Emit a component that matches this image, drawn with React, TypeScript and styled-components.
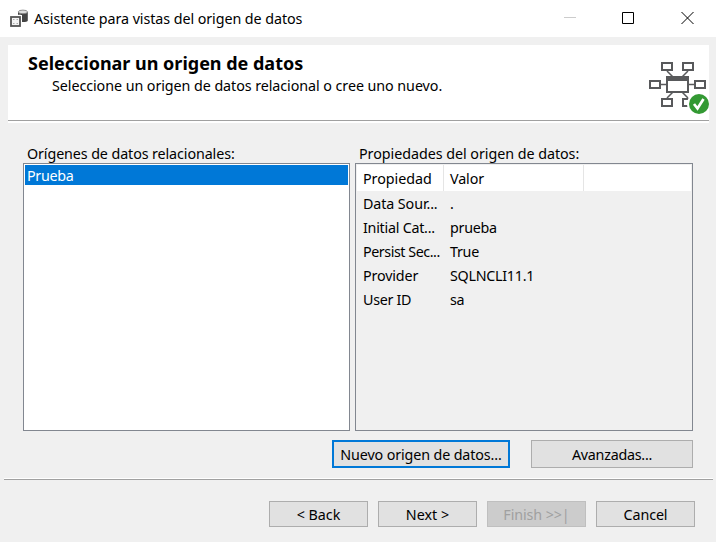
import React from "react";
import styled, { createGlobalStyle } from "styled-components";

const GlobalStyle = createGlobalStyle`
  * { box-sizing: border-box; }
  body { margin: 0; background: #f0f0f0; }
`;

const Window = styled.div`
  width: 716px;
  height: 542px;
  display: flex;
  flex-direction: column;
  overflow: hidden;
  background: #f0f0f0;
  color: #000;
  font: 14.3px/20px "Noto Sans", "Open Sans", sans-serif;
  white-space: nowrap;
`;

const TitleBar = styled.header`
  height: 37px;
  flex: none;
  display: flex;
  align-items: center;
  padding: 0 22px 0 9px;
  background: #fff;
`;

const Caption = styled.div`
  flex: 1;
  margin-left: 5px;
`;

const WindowControls = styled.div`
  display: flex;
  gap: 46px;
  padding-bottom: 1px;
  svg { display: block; }
`;

const Text = styled.span<{ $w?: number }>`
  display: inline-block;
  letter-spacing: ${(p) => p.$w ?? 0}px;
`;

const Banner = styled.section`
  flex: none;
  height: 78px;
  margin: 8px 7px 0 8px;
  display: flex;
  justify-content: space-between;
  background: linear-gradient(#fff 75px, #a0a0a0 75px, #a0a0a0 76px, #fff 76px);
`;

const BannerText = styled.div`
  padding: 6px 0 0 20px;
`;

const Heading = styled.h1`
  margin: 0;
  font-size: 18px;
  line-height: 24px;
  font-weight: 700;
`;

const Subheading = styled.p`
  margin: 1px 0 0 24px;
`;

const BannerIcon = styled.div`
  width: 61px;
  padding-top: 16px;
  svg { display: block; }
`;

const Columns = styled.main`
  flex: none;
  display: grid;
  grid-template-columns: 327px 338px;
  column-gap: 5px;
  margin: 20px 0 0 23px;
`;

const Label = styled.div`
  height: 20px;
  line-height: 21px;
  padding-left: 4px;
`;

const ListBox = styled.div<{ $plain?: boolean }>`
  height: 268px;
  padding: 1px;
  border: 1px solid #828790;
  background: ${(p) => (p.$plain ? "#f0f0f0" : "#fff")};
`;

const SelectedItem = styled.div`
  height: 20px;
  line-height: 22px;
  padding-left: 2px;
  background: #0078d7;
  color: #fff;
`;

const HeaderRow = styled.div`
  display: grid;
  grid-template-columns: 87px 140px 1fr;
  height: 26px;
  margin-bottom: 1px;
  line-height: 28px;
  background: #fff;
`;

const HeaderCell = styled.div`
  height: 26px;
  padding-left: 6px;
  border-right: 1px solid #e5e5e5;
  &:last-child { border: 0; }
`;

const PropertyRow = styled.div`
  display: grid;
  grid-template-columns: 87px 1fr;
  height: 24px;
  line-height: 24px;
`;

const Cell = styled.div`
  padding-left: 6px;
`;

const Button = styled.button<{ $width: number; $primary?: boolean }>`
  width: ${(p) => p.$width}px;
  height: 100%;
  padding: 2px 0 0;
  border: ${(p) => (p.$primary ? "2px solid #0078d7" : "1px solid #adadad")};
  background: #e1e1e1;
  color: #000;
  font: inherit;
  &:disabled {
    background: #ccc;
    border-color: #bfbfbf;
    color: #a0a0a0;
  }
`;

const Actions = styled.div`
  flex: none;
  display: flex;
  justify-content: flex-end;
  gap: 21px;
  height: 28px;
  margin: 9px 23px 0 0;
`;

const Divider = styled.div`
  flex: none;
  height: 2px;
  margin: 10px 3px 0 4px;
  border-top: 1px solid #fff;
  border-bottom: 1px solid #a0a0a0;
`;

const Footer = styled.footer`
  flex: none;
  display: flex;
  justify-content: flex-end;
  gap: 10px;
  height: 26px;
  margin: 21px 21px 0 0;
`;

const AppIcon = () => (
  <svg width="20" height="20" viewBox="0 0 20 20">
    <path d="M9 3v8.500c0 2 9.800 2 9.800 0V3z" fill="#444" />
    <path d="M9.500 5v6l2.500.8V5.500z" fill="#888" />
    <ellipse cx="13.900" cy="2.900" rx="4.600" ry="1.800" fill="#ddd" stroke="#777" strokeWidth=".8" />
    <rect x="2" y="8" width="9" height="9" fill="#f4f4f4" stroke="#fff" strokeWidth="4" />
    <rect x="2" y="8" width="9" height="9" fill="#f4f4f4" stroke="#555" strokeWidth="1.800" />
    <path d="M4 10.500h1.500M7.500 10.500H9M4 14.500h1.500M7.500 14.500H9" stroke="#aaa" />
  </svg>
);

const SchemaIcon = () => (
  <svg width="61" height="53" viewBox="648 61 61 53" fill="none">
    <path d="M667 71l6 6M688 71l-6 6M661 84.500h5M689 84.500h5M673 92l-6 6M682 92l6 6" stroke="#58595b" strokeWidth="1.500" />
    <g fill="#fff" stroke="#58595b" strokeWidth="2">
      <path d="M662 63h10v7h-10zM683 63h10v7h-10zM650 81h10v7h-10zM695 81h10v7h-10zM662 99h10v7h-10zM683 99h10v7h-10z" />
      <path d="M667 77h21v15h-21z" />
    </g>
    <path d="M666 76h23v5h-23z" fill="#58595b" />
    <circle cx="699" cy="104" r="12" fill="#fff" />
    <circle cx="699" cy="104" r="10" fill="#339933" />
    <path d="M694 104l3.500 4.500 6-9.500" stroke="#fff" strokeWidth="2.700" />
  </svg>
);

const properties = [
  { name: "Data Sour...", value: ".", spacing: -0.1 },
  { name: "Initial Cat...", value: "prueba", spacing: -0.25 },
  { name: "Persist Sec...", value: "True", spacing: -0.45 },
  { name: "Provider", value: "SQLNCLI11.1", spacing: -0.15 },
  { name: "User ID", value: "sa", spacing: -0.3 },
];

export default function App() {
  return (
    <>
      <GlobalStyle />
      <Window>
        <TitleBar>
          <AppIcon />
          <Caption><Text $w={-0.07}>Asistente para vistas del origen de datos</Text></Caption>
          <WindowControls>
            <svg width="13" height="12" viewBox="0 0 13 12"><path d="M1 5.500h12" stroke="#ccc" /></svg>
            <svg width="13" height="12" viewBox="0 0 13 12"><path d="M.5.500h11v11H.5z" fill="none" stroke="#000" /></svg>
            <svg width="13" height="12" viewBox="0 0 13 12"><path d="M.5 0l12 12M12.500 0l-12 12" stroke="#000" /></svg>
          </WindowControls>
        </TitleBar>
        <Banner>
          <BannerText>
            <Heading><Text $w={-0.01}>Seleccionar un origen de datos</Text></Heading>
            <Subheading><Text $w={-0.065}>Seleccione un origen de datos relacional o cree uno nuevo.</Text></Subheading>
          </BannerText>
          <BannerIcon><SchemaIcon /></BannerIcon>
        </Banner>
        <Columns>
          <div>
            <Label><Text $w={-0.1}>Orígenes de datos relacionales:</Text></Label>
            <ListBox>
              <SelectedItem><Text $w={-0.3}>Prueba</Text></SelectedItem>
            </ListBox>
          </div>
          <div>
            <Label><Text $w={-0.04}>Propiedades del origen de datos:</Text></Label>
            <ListBox $plain>
              <HeaderRow>
                <HeaderCell><Text $w={-0.05}>Propiedad</Text></HeaderCell>
                <HeaderCell><Text $w={-0.1}>Valor</Text></HeaderCell>
                <HeaderCell />
              </HeaderRow>
              {properties.map((p) => (
                <PropertyRow key={p.name}>
                  <Cell><Text $w={p.spacing}>{p.name}</Text></Cell>
                  <Cell><Text $w={-0.27}>{p.value}</Text></Cell>
                </PropertyRow>
              ))}
            </ListBox>
          </div>
        </Columns>
        <Actions>
          <Button $width={178} $primary><Text $w={-0.12}>Nuevo origen de datos...</Text></Button>
          <Button $width={162}><Text $w={-0.25}>Avanzadas...</Text></Button>
        </Actions>
        <Divider />
        <Footer>
          <Button $width={99}><Text $w={0}>&lt; Back</Text></Button>
          <Button $width={99}><Text $w={0}>Next &gt;</Text></Button>
          <Button $width={99} disabled><Text $w={-0.1}>Finish &gt;&gt;|</Text></Button>
          <Button $width={99}><Text $w={-0.1}>Cancel</Text></Button>
        </Footer>
      </Window>
    </>
  );
}
